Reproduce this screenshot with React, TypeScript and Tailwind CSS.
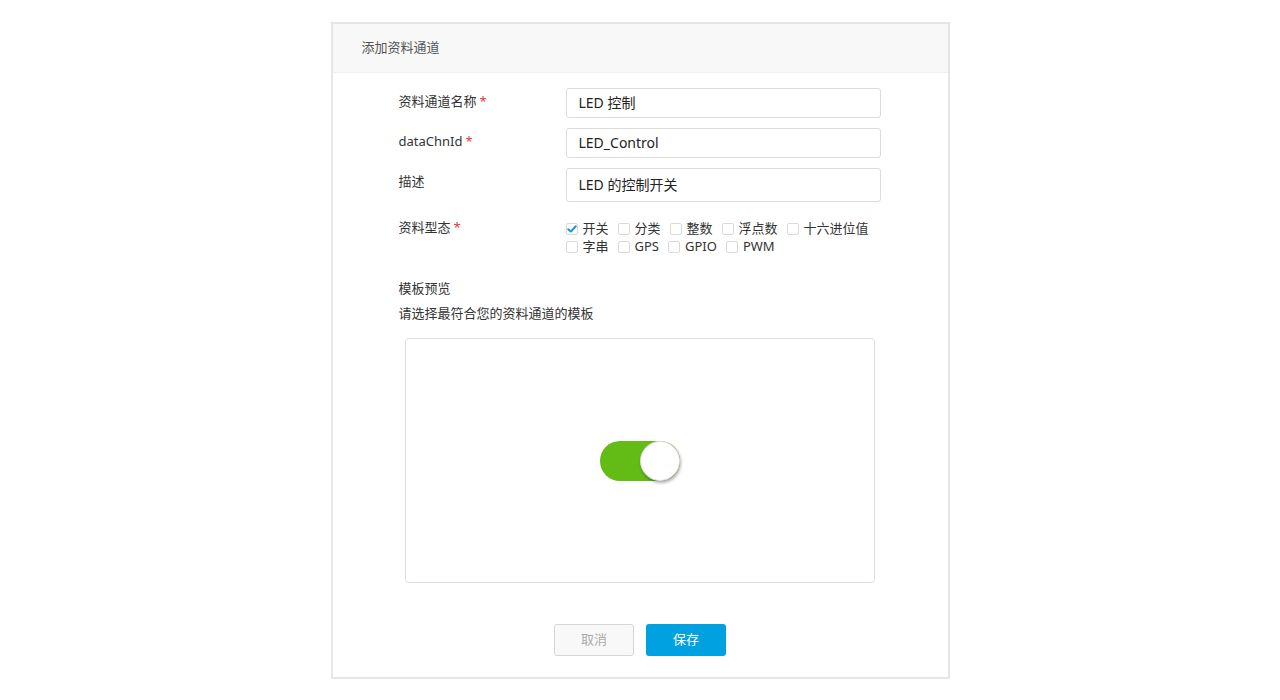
import React from 'react';

const font = { fontFamily: '"Noto Sans", "Noto Sans CJK SC", sans-serif' };

function Check({ label, checked }: { label: string; checked?: boolean }) {
  return (
    <span className="mr-[9px] inline-flex shrink-0 items-center gap-[5px] whitespace-nowrap leading-[18px]">
      <span className="relative mt-[2px] flex h-[12px] w-[12px] items-center justify-center rounded-[2px] border border-[#d9d9d9] bg-white">
        {checked && (
          <svg viewBox="0 0 12 12" className="absolute h-[12px] w-[12px]">
            <path d="M2.2 6.2 L4.8 8.6 L9.8 3.2" fill="none" stroke="#1e90e0" strokeWidth="2" strokeLinecap="round" strokeLinejoin="round" />
          </svg>
        )}
      </span>
      <span>{label}</span>
    </span>
  );
}

function Row({ label, required, value, tall }: { label: string; required?: boolean; value: string; tall?: boolean }) {
  return (
    <div className="flex">
      <div className="w-[167px] pt-[4px] text-[13px] text-[#333]">
        {label}
        {required && <span className="ml-[3px] text-[#e53935]">*</span>}
      </div>
      <div
        className={`flex w-[315px] items-center rounded-[3px] border border-[#dcdcdc] px-[12px] pb-[2px] text-[14px] text-[#222] ${tall ? 'h-[34px]' : 'h-[30px]'}`}
      >
        {value}
      </div>
    </div>
  );
}

export default function App() {
  return (
    <div className="min-h-[700px] bg-white pt-[22px]" style={font}>
      <div className="mx-auto w-[619px] border-2 border-[#e6e6e6] bg-white">
        <div className="flex h-[49px] items-center border-b border-[#efefef] bg-[#f8f8f8] pl-[29px] text-[13px] text-[#555]">
          添加资料通道
        </div>

        <div className="pl-[66px] pt-[15px]">
          <div className="flex flex-col gap-[10px]">
            <Row label="资料通道名称" required value="LED 控制" />
            <Row label="dataChnId" required value="LED_Control" />
            <Row label="描述" value="LED 的控制开关" tall />
          </div>

          <div className="mt-[16px] flex">
            <div className="w-[167px] text-[13px] text-[#333]">
              资料型态<span className="ml-[3px] text-[#e53935]">*</span>
            </div>
            <div className="w-[340px] pt-[1px] text-[13px] text-[#333]">
              <div className="flex">
                <Check label="开关" checked />
                <Check label="分类" />
                <Check label="整数" />
                <Check label="浮点数" />
                <Check label="十六进位值" />
              </div>
              <div className="flex">
                <Check label="字串" />
                <Check label="GPS" />
                <Check label="GPIO" />
                <Check label="PWM" />
              </div>
            </div>
          </div>

          <div className="mt-[24px] text-[13px] leading-[18px] text-[#333]">模板预览</div>
          <div className="mt-[7px] text-[13px] leading-[18px] text-[#333]">请选择最符合您的资料通道的模板</div>
        </div>

        <div className="mt-[16px] flex justify-center">
          <div className="flex h-[245px] w-[470px] items-center justify-center rounded-[4px] border border-[#dedede]">
            <div className="flex h-[40px] w-[80px] items-center justify-end rounded-full bg-[#63bb16]">
              <div className="h-[40px] w-[40px] rounded-full border border-[#e0e0e0] bg-white shadow-[1px_2px_3px_rgba(0,0,0,0.3)]" />
            </div>
          </div>
        </div>

        <div className="mt-[41px] mb-[21px] flex justify-center gap-[12px]">
          <div className="flex h-[32px] w-[80px] items-center justify-center rounded-[3px] border border-[#d6d6d6] bg-[#f8f8f8] text-[13px] text-[#aaa]">
            取消
          </div>
          <div className="flex h-[32px] w-[80px] items-center justify-center rounded-[3px] bg-[#00a1e1] text-[13px] text-white">
            保存
          </div>
        </div>
      </div>
    </div>
  );
}
